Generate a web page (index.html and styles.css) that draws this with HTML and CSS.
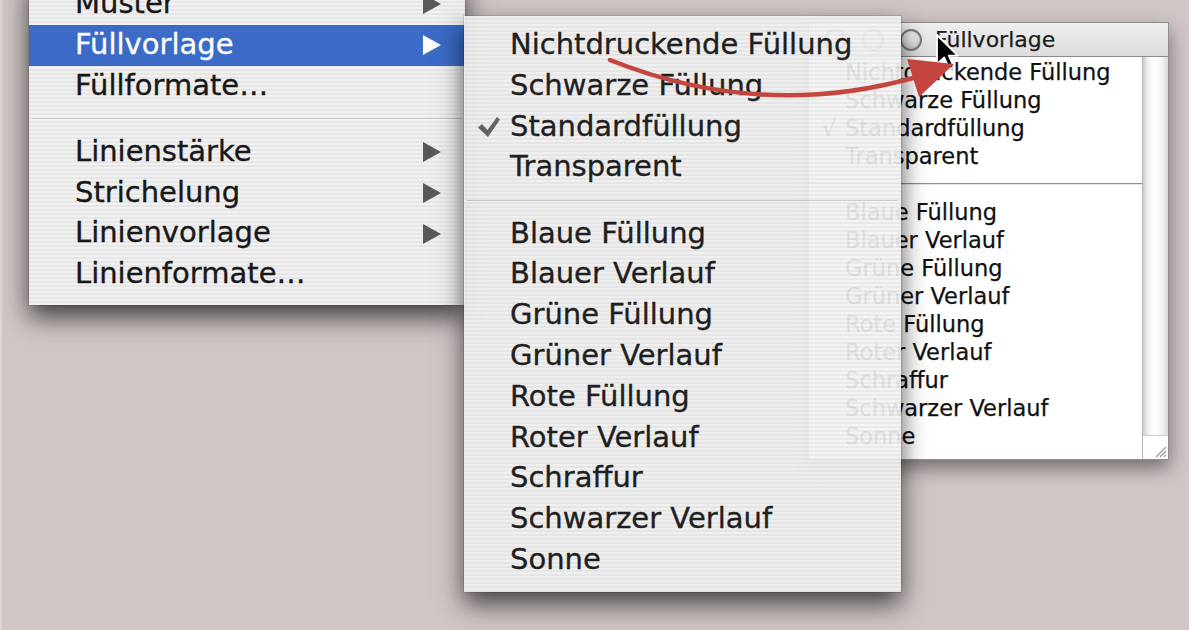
FILE: index.html
```html
<!DOCTYPE html>
<html lang="de">
<head>
<meta charset="utf-8">
<title>Füllvorlage</title>
<link rel="stylesheet" href="styles.css">
</head>
<body>
<div class="desktop">

  <div class="palette">
    <div class="titlebar">
      <span class="light"></span><span class="light"></span><span class="light"></span>
      <span class="title">Füllvorlage</span>
    </div>
    <div class="pbody">
      <div class="plist">
        <div class="pitem"><span class="pcheck"></span>Nichtdruckende Füllung</div>
        <div class="pitem"><span class="pcheck"></span>Schwarze Füllung</div>
        <div class="pitem"><span class="pcheck">√</span>Standardfüllung</div>
        <div class="pitem"><span class="pcheck"></span>Transparent</div>
        <div class="psep"></div>
        <div class="pitem"><span class="pcheck"></span>Blaue Füllung</div>
        <div class="pitem"><span class="pcheck"></span>Blauer Verlauf</div>
        <div class="pitem"><span class="pcheck"></span>Grüne Füllung</div>
        <div class="pitem"><span class="pcheck"></span>Grüner Verlauf</div>
        <div class="pitem"><span class="pcheck"></span>Rote Füllung</div>
        <div class="pitem"><span class="pcheck"></span>Roter Verlauf</div>
        <div class="pitem"><span class="pcheck"></span>Schraffur</div>
        <div class="pitem"><span class="pcheck"></span>Schwarzer Verlauf</div>
        <div class="pitem"><span class="pcheck"></span>Sonne</div>
      </div>
      <div class="scroll">
        <div class="track"></div>
        <div class="grip">
          <svg width="14" height="14" viewBox="0 0 14 14"><path d="M13 3 L3 13 M13 7 L7 13 M13 11 L11 13" stroke="#9a9a9a" stroke-width="1.2" fill="none"/></svg>
        </div>
      </div>
    </div>
  </div>

  <div class="menu main">
    <div class="row"><span class="label">Muster</span><svg class="sub-arrow" viewBox="0 0 18 20"><polygon points="0,0 18,10 0,20"/></svg></div>
    <div class="row hl"><span class="label">Füllvorlage</span><svg class="sub-arrow" viewBox="0 0 18 20"><polygon points="0,0 18,10 0,20"/></svg></div>
    <div class="row"><span class="label">Füllformate…</span></div>
    <div class="sep"></div>
    <div class="row"><span class="label">Linienstärke</span><svg class="sub-arrow" viewBox="0 0 18 20"><polygon points="0,0 18,10 0,20"/></svg></div>
    <div class="row"><span class="label">Strichelung</span><svg class="sub-arrow" viewBox="0 0 18 20"><polygon points="0,0 18,10 0,20"/></svg></div>
    <div class="row"><span class="label">Linienvorlage</span><svg class="sub-arrow" viewBox="0 0 18 20"><polygon points="0,0 18,10 0,20"/></svg></div>
    <div class="row"><span class="label">Linienformate…</span></div>
  </div>

  <div class="menu sub">
    <div class="row"><span class="check"></span><span class="label">Nichtdruckende Füllung</span></div>
    <div class="row"><span class="check"></span><span class="label">Schwarze Füllung</span></div>
    <div class="row"><span class="check"><svg width="22" height="20" viewBox="0 0 22 20"><path d="M0 10.5 L4 7 L9.5 13 L19 0 L22 2.5 L10 20 Z" fill="#5c5c5c"/></svg></span><span class="label">Standardfüllung</span></div>
    <div class="row"><span class="check"></span><span class="label">Transparent</span></div>
    <div class="sep"></div>
    <div class="row"><span class="check"></span><span class="label">Blaue Füllung</span></div>
    <div class="row"><span class="check"></span><span class="label">Blauer Verlauf</span></div>
    <div class="row"><span class="check"></span><span class="label">Grüne Füllung</span></div>
    <div class="row"><span class="check"></span><span class="label">Grüner Verlauf</span></div>
    <div class="row"><span class="check"></span><span class="label">Rote Füllung</span></div>
    <div class="row"><span class="check"></span><span class="label">Roter Verlauf</span></div>
    <div class="row"><span class="check"></span><span class="label">Schraffur</span></div>
    <div class="row"><span class="check"></span><span class="label">Schwarzer Verlauf</span></div>
    <div class="row"><span class="check"></span><span class="label">Sonne</span></div>
  </div>

  <svg class="cursor" width="24" height="38" viewBox="0 0 12 19">
    <path d="M1 1 V15.5 L4.6 12.2 L7.2 18 L9.4 17 L6.9 11.3 L11.4 11.3 Z" fill="#000" stroke="#fff" stroke-width="0.9" stroke-linejoin="round"/>
  </svg>

  <svg class="annot" width="1189" height="630" viewBox="0 0 1189 630">
    <path d="M610 60 Q760 120 913 78" fill="none" stroke="#c4453f" stroke-width="4.5" stroke-linecap="round"/>
    <polygon points="907,59 919,97 954,64" fill="#c4453f"/>
  </svg>

</div>
</body>
</html>
```

FILE: styles.css
```css
body {
  margin: 0;
}

.desktop {
  position: relative;
  width: 1189px;
  height: 630px;
  overflow: hidden;
  background: #cfc6c5;
  box-shadow: inset 2px 0 0 #ddd6d5;
  font-family: "DejaVu Sans", "Liberation Sans", sans-serif;
  color: #111;
}

/* ---------- torn-off palette window ---------- */
.palette {
  position: absolute;
  left: 808px;
  top: 22px;
  width: 361px;
  height: 438px;
  box-sizing: border-box;
  border: 1px solid #8e8e8e;
  background: #fff;
  display: flex;
  flex-direction: column;
  box-shadow: 0 8px 18px rgba(0, 0, 0, 0.45);
}

.titlebar {
  height: 34px;
  box-sizing: border-box;
  border-bottom: 1px solid #8a8a8a;
  background: linear-gradient(#efefef, #dcdcdc);
  display: flex;
  align-items: center;
  padding-left: 15px;
  gap: 16px;
}

.light {
  width: 22px;
  height: 22px;
  box-sizing: border-box;
  border-radius: 50%;
  border: 2px solid #7b7b7b;
  background: radial-gradient(circle at 50% 35%, #f6f6f6 0, #dcdcdc 55%, #b4b4b4 100%);
}

.title {
  margin-left: -3px;
  font-size: 22px;
  color: #1c1c1c;
  -webkit-text-stroke: 0.25px #1c1c1c;
}

.pbody {
  flex: 1;
  display: flex;
  min-height: 0;
}

.plist {
  flex: 1;
  padding-top: 1px;
  font-size: 22.5px;
  -webkit-text-stroke: 0.25px #111;
}

.pitem {
  height: 28px;
  line-height: 29px;
  display: flex;
  padding-left: 13px;
  white-space: nowrap;
}

.pcheck {
  width: 23px;
  flex: none;
}

.psep {
  height: 28px;
  display: flex;
  align-items: center;
}

.psep::before {
  content: "";
  flex: 1;
  height: 1px;
  background: #8f8f8f;
  border-bottom: 1px solid #e4e4e4;
}

.scroll {
  width: 25px;
  flex: none;
  display: flex;
  flex-direction: column;
  border-left: 1px solid #b5b5b5;
}

.track {
  flex: 1;
  background: linear-gradient(to right, #cdcdcd 0, #f1f1f1 20%, #ffffff 45%, #f4f4f4 75%, #dadada 100%);
}

.grip {
  height: 22px;
  border-top: 1px solid #cbcbcb;
  background: #fff;
  display: flex;
  justify-content: flex-end;
  align-items: flex-end;
  padding: 0 1px 1px 0;
}

/* ---------- menus ---------- */
.menu {
  position: absolute;
  box-sizing: border-box;
  background: repeating-linear-gradient(to bottom, #f3f3f3 0, #f3f3f3 2px, #e8e8e8 2px, #e8e8e8 4px);
  box-shadow: 0 0 0 1px rgba(0, 0, 0, 0.12), 0 12px 24px rgba(0, 0, 0, 0.72);
  font-size: 29px;
  -webkit-text-stroke: 0.35px currentColor;
}

.menu.main {
  left: 29px;
  top: -25px;
  width: 436px;
  padding: 9px 0 10px;
  opacity: 0.96;
}

.menu.sub {
  left: 464px;
  top: 16px;
  width: 437px;
  padding: 9px 0 11px;
  opacity: 0.92;
}

.row {
  height: 40.8px;
  display: flex;
  align-items: flex-start;
  white-space: nowrap;
}

.main .row {
  padding: 0 24px 0 46px;
  justify-content: space-between;
}

.sub .row {
  padding-left: 14px;
}

.label {
  line-height: 39.5px;
}

.row.hl {
  background: #3668c7;
  color: #fff;
}

.sub-arrow {
  width: 18px;
  height: 20px;
  align-self: center;
  fill: #555;
}

.row.hl .sub-arrow {
  fill: #fff;
}

.check {
  width: 32px;
  flex: none;
  align-self: center;
  display: flex;
}

.sep {
  height: 25.4px;
  display: flex;
  align-items: center;
  padding: 0 3px;
}

.sep::before {
  content: "";
  flex: 1;
  height: 1px;
  background: #c9c9c9;
  border-bottom: 1px solid #f6f6f6;
}

/* ---------- overlays ---------- */
.cursor {
  position: absolute;
  left: 935px;
  top: 33px;
}

.annot {
  position: absolute;
  left: 0;
  top: 0;
  pointer-events: none;
}
```
